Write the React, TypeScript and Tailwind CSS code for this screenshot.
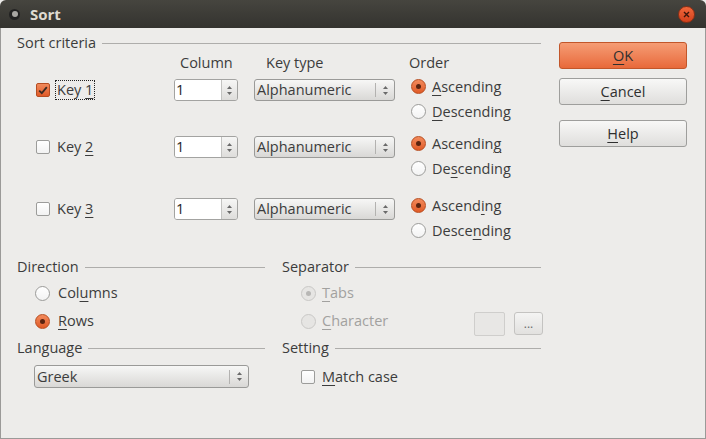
import type { ReactNode } from "react";

// mnemonic label: underlines the character at index u
function Mn({ text, u }: { text: string; u: number }) {
    return (
        <span>
            {text.slice(0, u)}
            <span className="underline decoration-1 underline-offset-[3px]">{text[u]}</span>
            {text.slice(u + 1)}
        </span>
    );
}

function Section({ title }: { title: string }) {
    return (
        <div className="flex items-center h-[20px]">
            <span>{title}</span>
            <div className="ml-[6px] flex-1 h-px bg-[#aeadab]" />
        </div>
    );
}

function UpDown() {
    return (
        <svg width="7" height="11" viewBox="0 0 7 11">
            <path d="M3.5 1 L6 4 L1 4 Z" fill="#6a6a6a" />
            <path d="M3.5 10 L6 7 L1 7 Z" fill="#6a6a6a" />
        </svg>
    );
}

function CheckBox({ checked }: { checked?: boolean }) {
    if (checked) {
        return (
            <div className="w-[14px] h-[14px] rounded-[2px] border border-[#b64d22] bg-gradient-to-b from-[#f08a5c] to-[#e05a26] flex items-center justify-center">
                <svg width="10" height="9" viewBox="0 0 10 9">
                    <path d="M1.2 4.6 L3.8 7.2 L8.8 1.2" stroke="#3a2a22" strokeWidth="1.8" fill="none" />
                </svg>
            </div>
        );
    }
    return <div className="w-[14px] h-[14px] rounded-[2px] border border-[#9c9c9a] bg-gradient-to-b from-white to-[#f2f2f2]" />;
}

function Radio({ on, disabled }: { on?: boolean; disabled?: boolean }) {
    if (disabled) {
        return (
            <div className="w-[15px] h-[15px] rounded-full border border-[#c9c8c6] bg-[#e6e5e3] flex items-center justify-center">
                {on && <div className="w-[5px] h-[5px] rounded-full bg-[#b8b7b5]" />}
            </div>
        );
    }
    if (on) {
        return (
            <div className="w-[15px] h-[15px] rounded-full border border-[#b84d20] bg-gradient-to-b from-[#f28a5b] to-[#e05a25] flex items-center justify-center">
                <div className="w-[5px] h-[5px] rounded-full bg-[#5a2410]" />
            </div>
        );
    }
    return <div className="w-[15px] h-[15px] rounded-full border border-[#9c9c9a] bg-gradient-to-b from-white to-[#f3f3f3]" />;
}

function Spin() {
    return (
        <div className="flex w-[64px] h-[22px] rounded-[3px] border border-[#a3a3a1] overflow-hidden">
            <div className="flex-1 bg-white flex items-center pl-[1px] text-[#1e1e1e]">1</div>
            <div className="w-[16px] border-l border-[#c3c3c1] bg-gradient-to-b from-[#f6f6f5] to-[#dedddb] flex items-center justify-center">
                <UpDown />
            </div>
        </div>
    );
}

function Combo({ label, w }: { label: string; w: string }) {
    return (
        <div className={`flex items-center h-[22px] ${w} rounded-[3px] border border-[#9a9a98] bg-gradient-to-b from-[#f7f7f6] to-[#d9d8d6] pl-[2px]`}>
            <span className="flex-1">{label}</span>
            <div className="w-px h-[14px] bg-[#b3b2b0]" />
            <div className="w-[18px] flex justify-center">
                <UpDown />
            </div>
        </div>
    );
}

function RadioRow({ on, children }: { on?: boolean; children: ReactNode }) {
    return (
        <div className="flex items-center h-[25px] gap-[6px]">
            <Radio on={on} />
            {children}
        </div>
    );
}

function KeyBlock({ n, checked, asc, desc, focus }: { n: number; checked?: boolean; asc: ReactNode; desc: ReactNode; focus?: boolean }) {
    return (
        <div className="flex pl-[19px] h-[50px]">
            <div className="w-[138px] h-[22px] mt-[4px] flex items-center gap-[6px]">
                <CheckBox checked={checked} />
                <span className={focus ? "outline outline-1 outline-dotted outline-[#222] px-[1px] leading-[18px]" : "px-[1px]"}>
                    Key <Mn text={String(n)} u={0} />
                </span>
            </div>
            <div className="w-[80px] mt-[4px]">
                <Spin />
            </div>
            <div className="w-[157px] mt-[4px]">
                <Combo label="Alphanumeric" w="w-[141px]" />
            </div>
            <div className="flex flex-col -mt-[1px]">
                <RadioRow on>{asc}</RadioRow>
                <RadioRow>{desc}</RadioRow>
            </div>
        </div>
    );
}

function Btn({ children, primary }: { children: ReactNode; primary?: boolean }) {
    return (
        <div
            className={
                primary
                    ? "h-[27px] rounded-[3px] border border-[#c2562a] bg-gradient-to-b from-[#f59c74] to-[#e8693a] flex items-center justify-center text-[#2f2f2f]"
                    : "h-[27px] rounded-[3px] border border-[#9e9e9c] bg-gradient-to-b from-[#f8f8f7] to-[#dfdedc] flex items-center justify-center text-[#2f2f2f]"
            }
        >
            {children}
        </div>
    );
}

export default function App() {
    return (
        <div className="w-[706px] h-[439px] flex flex-col font-['Open_Sans',sans-serif] text-[14.5px] text-[#3c3c3c] bg-[#edecea]">
            <div className="h-[28px] shrink-0 rounded-t-[6px] bg-gradient-to-b from-[#46453f] to-[#34332f] flex items-center">
                <div className="ml-[9px] w-[11px] h-[11px] rounded-full bg-[#222] flex items-center justify-center">
                    <div className="w-[6px] h-[6px] rounded-full bg-[#a8a7a3]" />
                </div>
                <span className="ml-[10px] font-bold text-[15px] text-[#dfdbd2]">Sort</span>
                <div className="ml-auto mr-[11px] w-[17px] h-[17px] rounded-full bg-gradient-to-b from-[#f0673b] to-[#d2401b] flex items-center justify-center border border-[#8e2f14]">
                    <svg width="7" height="7" viewBox="0 0 7 7">
                        <path d="M1 1 L6 6 M6 1 L1 6" stroke="#3b160b" strokeWidth="1.4" />
                    </svg>
                </div>
            </div>
            <div className="flex-1 flex border-x border-b border-[#9b9a98]">
                <div className="w-[540px] pl-[16px] pt-[5px] flex flex-col">
                    <Section title="Sort criteria" />
                    <div className="flex h-[19px] items-center pl-[19px]">
                        <div className="w-[138px]" />
                        <div className="w-[80px] pl-[6px]">Column</div>
                        <div className="w-[157px] pl-[12px]">Key type</div>
                        <div className="-ml-[2px]">Order</div>
                    </div>
                    <div className="mt-[3px]">
                        <KeyBlock n={1} checked focus asc={<Mn text="Ascending" u={0} />} desc={<Mn text="Descending" u={0} />} />
                    </div>
                    <div className="mt-[7px]">
                        <KeyBlock n={2} asc={<Mn text="Ascending" u={8} />} desc={<Mn text="Descending" u={2} />} />
                    </div>
                    <div className="mt-[12px]">
                        <KeyBlock n={3} asc={<Mn text="Ascending" u={6} />} desc={<Mn text="Descending" u={5} />} />
                    </div>
                    <div className="mt-[13px] flex gap-[17px]">
                        <div className="w-[248px] flex flex-col">
                            <Section title="Direction" />
                            <div className="mt-[3px] h-[26px] flex items-center gap-[8px] pl-[18px]">
                                <Radio />
                                <Mn text="Columns" u={3} />
                            </div>
                            <div className="mt-[2px] h-[26px] flex items-center gap-[8px] pl-[18px]">
                                <Radio on />
                                <Mn text="Rows" u={0} />
                            </div>
                            <div className="mt-[4px]">
                                <Section title="Language" />
                            </div>
                            <div className="mt-[7px] pl-[17px]">
                                <Combo label="Greek" w="w-[215px] h-[23px]" />
                            </div>
                        </div>
                        <div className="w-[259px] flex flex-col">
                            <Section title="Separator" />
                            <div className="mt-[3px] h-[26px] flex items-center gap-[6px] pl-[19px] text-[#a2a19f]">
                                <Radio on disabled />
                                <Mn text="Tabs" u={0} />
                            </div>
                            <div className="mt-[2px] h-[26px] flex items-center gap-[6px] pl-[19px] text-[#a2a19f] -mr-[2px]">
                                <Radio disabled />
                                <Mn text="Character" u={0} />
                                <div className="flex-1" />
                                <div className="self-start mt-[4px] w-[31px] h-[24px] rounded-[2px] border border-[#cfcecc] bg-[#e8e7e5]" />
                                <div className="self-start mt-[4px] ml-[3px] w-[29px] h-[23px] rounded-[3px] border border-[#c4c3c1] bg-gradient-to-b from-[#f4f4f3] to-[#e2e1df] flex items-center justify-center text-[#6a6a6a] text-[12px]">
                                    ...
                                </div>
                            </div>
                            <div className="mt-[4px]">
                                <Section title="Setting" />
                            </div>
                            <div className="mt-[7px] h-[23px] flex items-center gap-[7px] pl-[19px]">
                                <CheckBox />
                                <Mn text="Match case" u={0} />
                            </div>
                        </div>
                    </div>
                </div>
                <div className="ml-[18px] w-[128px] pt-[14px] flex flex-col">
                    <Btn primary>
                        <Mn text="OK" u={0} />
                    </Btn>
                    <div className="mt-[9px]">
                        <Btn>
                            <Mn text="Cancel" u={0} />
                        </Btn>
                    </div>
                    <div className="mt-[15px]">
                        <Btn>
                            <Mn text="Help" u={0} />
                        </Btn>
                    </div>
                </div>
            </div>
        </div>
    );
}
